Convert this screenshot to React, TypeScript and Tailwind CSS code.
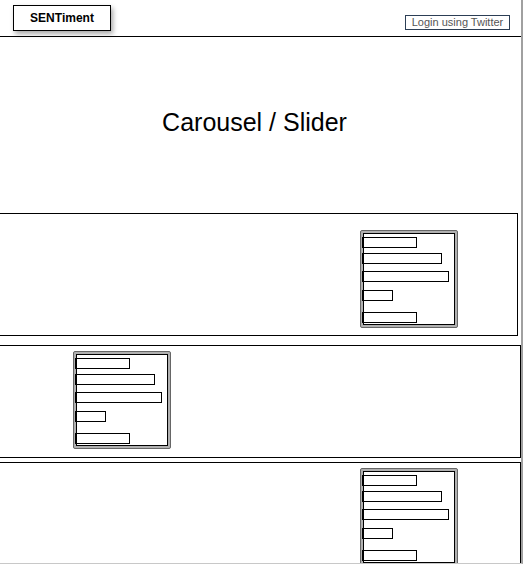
import React from "react"

const bars = [
  { w: "w-[55px]", mt: "mt-[3px]" },
  { w: "w-[80px]", mt: "mt-[5px]" },
  { w: "w-[87px]", mt: "mt-[7px]" },
  { w: "w-[31px]", mt: "mt-[8px]" },
  { w: "w-[55px]", mt: "mt-[11px]" },
]

function Chart() {
  return (
    <div className="w-[98px] h-[98px] border border-[#666] bg-[#b0b0b0] p-[2px] rounded-[2px]">
      <div className="h-full border border-black bg-white">
        {bars.map((b, i) => (
          <div key={i} className={`${b.w} ${b.mt} h-[11px] border border-black border-l-2 -ml-[2px] bg-white`} />
        ))}
      </div>
    </div>
  )
}

export default function App() {
  return (
    <div className="w-[523px] h-[565px] overflow-hidden bg-white" style={{ fontFamily: '"Liberation Sans", Arial, sans-serif' }}>
      <div className="relative w-[523px] h-[564px] border-r-2 border-b border-r-[#a0a0a0] border-b-[#c8c8c8] overflow-hidden flex flex-col">
        {/* Header */}
        <div className="h-[37px] shrink-0 border-b border-black flex items-start justify-between">
          <div className="ml-[13px] mt-[5px] w-[98px] h-[26px] border border-black bg-white shadow-[2px_3px_5px_rgba(0,0,0,0.35)] flex items-center justify-center">
            <span className="text-[12px] font-bold text-black">SENTiment</span>
          </div>
          <div className="mt-[15px] mr-[11px] w-[105px] h-[15px] border border-[#2c3e55] flex items-center justify-center">
            <span className="text-[11px] leading-none text-[#555]">Login using Twitter</span>
          </div>
        </div>

        {/* Carousel */}
        <div className="h-[176px] shrink-0 flex items-center justify-center pb-[5px] pr-[12px]">
          <span className="text-[25px] text-black">Carousel / Slider</span>
        </div>

        {/* Row 1 */}
        <div className="h-[123px] shrink-0 -ml-[2px] mr-[3px] border border-l-0 border-black flex items-start pl-[362px] pt-[16px]">
          <Chart />
        </div>

        {/* Row 2 */}
        <div className="h-[113px] shrink-0 mt-[9px] border border-l-0 border-black flex items-start pl-[73px] pt-[5px]">
          <Chart />
        </div>

        {/* Row 3 */}
        <div className="h-[140px] shrink-0 mt-[4px] border border-l-0 border-black flex items-start pl-[360px] pt-[5px]">
          <Chart />
        </div>
      </div>
    </div>
  )
}
